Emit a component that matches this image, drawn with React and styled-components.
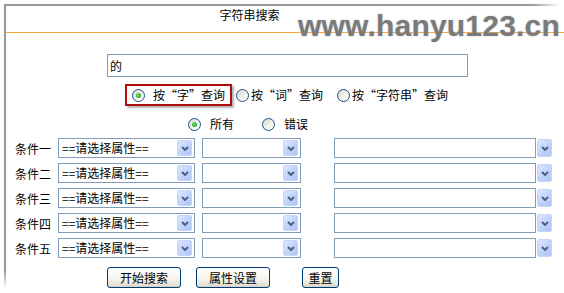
import React from 'react';
import styled, { createGlobalStyle } from 'styled-components';

const GlobalStyle = createGlobalStyle`
  html, body {
    margin: 0;
    padding: 0;
    background: #fff;
  }
  body {
    font-family: "Noto Sans CJK SC", "Liberation Sans", sans-serif;
    font-size: 12px;
    color: #000;
    overflow: hidden;
  }
`;

const Frame = styled.div`
  position: relative;
  margin: 4px 0 0 4px;
  padding: 2px 0 0 2px;
  height: 284px;
  box-sizing: border-box;

  &::before {
    content: '';
    position: absolute;
    top: 0;
    left: 0;
    right: 4px;
    height: 2px;
    background: linear-gradient(to right, #9a9a9a 0%, #9a9a9a 95%, rgba(154, 154, 154, 0) 100%);
    box-shadow: 0 0 1px #c8c8c8;
  }
  &::after {
    content: '';
    position: absolute;
    top: 0;
    left: 0;
    bottom: 0;
    width: 2px;
    background: linear-gradient(to bottom, #9a9a9a 0%, #9a9a9a 94%, rgba(154, 154, 154, 0) 100%);
    box-shadow: 0 0 1px #c8c8c8;
  }
`;

const Header = styled.div`
  position: relative;
  height: 26px;
  border-bottom: 1px solid #f8a43c;
`;

const Title = styled.div`
  width: 487px;
  padding-top: 2px;
  line-height: 14px;
  text-align: center;
`;

const Watermark = styled.div`
  position: absolute;
  left: 292px;
  top: 5px;
  font-family: "Liberation Sans", Arial, sans-serif;
  font-weight: bold;
  font-size: 30px;
  line-height: 30px;
  letter-spacing: 0.2px;
  color: #7a7a7a;
  text-shadow: 0 0 2px #c4c4c4;
  white-space: nowrap;
`;

const QueryInput = styled.input`
  display: block;
  margin: 21px 0 0 101px;
  width: 361px;
  height: 23px;
  box-sizing: border-box;
  border: 1px solid #7f9db9;
  padding: 0 2px;
  font-family: "Noto Sans CJK SC", sans-serif;
  font-size: 12px;
  color: #000;
  outline: none;
`;

const ModeBar = styled.div`
  display: flex;
  align-items: center;
  margin: 7px 0 0 119px;
  height: 22px;
`;

const Highlight = styled.div`
  display: flex;
  align-items: center;
  box-sizing: border-box;
  width: 107px;
  height: 22px;
  padding-left: 5px;
  border: 2px solid #b10f0f;
  box-shadow: 2px 2px 2px rgba(0, 0, 0, 0.3);
`;

const Option = styled.label`
  display: flex;
  align-items: center;
  gap: ${p => p.$gap}px;
  margin-left: ${p => p.$offset || 0}px;
  white-space: nowrap;
  line-height: 16px;
`;

const Radio = styled.span`
  display: flex;
  align-items: center;
  justify-content: center;
  flex: none;
  width: 13px;
  height: 13px;
  box-sizing: border-box;
  border-radius: 50%;
  border: 1px solid #1c5180;
  background: linear-gradient(135deg, #d8d8d2 0%, #f4f4f0 60%, #fff 100%);

  &::after {
    content: '';
    display: ${p => (p.$checked ? 'block' : 'none')};
    width: 5px;
    height: 5px;
    border-radius: 50%;
    background: radial-gradient(circle at 40% 40%, #6fe26f 0%, #2eb02e 60%, #1d8f1d 100%);
  }
`;

const Quote = styled.span`
  display: inline-block;
  width: 12px;
  text-align: ${p => (p.$open ? 'right' : 'left')};
`;

const FilterBar = styled.div`
  display: flex;
  align-items: center;
  height: 16px;
  margin: 10px 0 0 182px;
`;

const Conditions = styled.div`
  display: flex;
  flex-direction: column;
  gap: 5px;
  margin-top: 6px;
`;

const Row = styled.div`
  display: flex;
  align-items: center;
  height: 20px;
`;

const RowLabel = styled.span`
  width: 36px;
  margin-left: 9px;
  padding-top: 2px;
  line-height: 16px;
  white-space: nowrap;
`;

const Select = styled.div`
  display: flex;
  align-items: center;
  box-sizing: border-box;
  width: ${p => p.$width}px;
  height: 20px;
  margin-left: ${p => p.$offset}px;
  border: 1px solid #7f9db9;
  background: #fff;
`;

const SelectText = styled.span`
  flex: 1;
  padding-left: 3px;
  white-space: nowrap;
  overflow: hidden;
  line-height: 16px;
`;

const Arrow = styled.span`
  display: flex;
  align-items: center;
  justify-content: center;
  flex: none;
  width: 15px;
  height: ${p => p.$height || 16}px;
  margin: ${p => (p.$outside ? '0 0 0 1px' : '0 2px 0 0')};
  box-sizing: border-box;
  border: 1px solid #c5d5fa;
  border-radius: 2px;
  background: linear-gradient(135deg, #dde7fe 0%, #c3d4fb 50%, #b0c5f4 100%);
`;

const TextBox = styled.div`
  box-sizing: border-box;
  width: 202px;
  height: 20px;
  margin-left: 33px;
  border: 1px solid #7f9db9;
  background: #fff;
`;

const Actions = styled.div`
  display: flex;
  align-items: center;
  margin: 9px 0 0 101px;
`;

const Button = styled.button`
  box-sizing: border-box;
  width: ${p => p.$width}px;
  height: 21px;
  margin-left: ${p => p.$offset || 0}px;
  padding: 0;
  border: 1px solid #003c74;
  border-radius: 3px;
  background: linear-gradient(to bottom, #ffffff 0%, #f6f5f0 55%, #e3e0d4 90%, #d6d0c5 100%);
  font-family: "Noto Sans CJK SC", sans-serif;
  font-size: 12px;
  line-height: 16px;
  color: #000;
`;

const Chevron = () => (
  <svg width="8" height="5" viewBox="0 0 8 5">
    <polyline points="1,1 4,4 7,1" fill="none" stroke="#4d6185" strokeWidth="2" />
  </svg>
);

const RadioOption = ({ checked, gap, offset, children }) => (
  <Option $gap={gap} $offset={offset}>
    <Radio $checked={checked} />
    <span>{children}</span>
  </Option>
);

const QuotedLabel = ({ word }) => (
  <>
    按<Quote $open>“</Quote>{word}<Quote>”</Quote>查询
  </>
);

const rows = ['条件一', '条件二', '条件三', '条件四', '条件五'];

export default function App() {
  return (
    <>
      <GlobalStyle />
      <Frame>
        <Header>
          <Title>字符串搜索</Title>
          <Watermark>www.hanyu123.cn</Watermark>
        </Header>

        <QueryInput defaultValue="的" readOnly />

        <ModeBar>
          <Highlight>
            <RadioOption checked gap={8}>
              <QuotedLabel word="字" />
            </RadioOption>
          </Highlight>
          <RadioOption gap={2} offset={4}>
            <QuotedLabel word="词" />
          </RadioOption>
          <RadioOption gap={2} offset={14}>
            <QuotedLabel word="字符串" />
          </RadioOption>
        </ModeBar>

        <FilterBar>
          <RadioOption checked gap={9}>所有</RadioOption>
          <RadioOption gap={9} offset={28}>错误</RadioOption>
        </FilterBar>

        <Conditions>
          {rows.map(label => (
            <Row key={label}>
              <RowLabel>{label}</RowLabel>
              <Select $width={137} $offset={7}>
                <SelectText>==请选择属性==</SelectText>
                <Arrow><Chevron /></Arrow>
              </Select>
              <Select $width={99} $offset={7}>
                <SelectText />
                <Arrow><Chevron /></Arrow>
              </Select>
              <TextBox />
              <Arrow $outside $height={18}><Chevron /></Arrow>
            </Row>
          ))}
        </Conditions>

        <Actions>
          <Button $width={74}>开始搜索</Button>
          <Button $width={74} $offset={15}>属性设置</Button>
          <Button $width={37} $offset={32}>重置</Button>
        </Actions>
      </Frame>
    </>
  );
}
